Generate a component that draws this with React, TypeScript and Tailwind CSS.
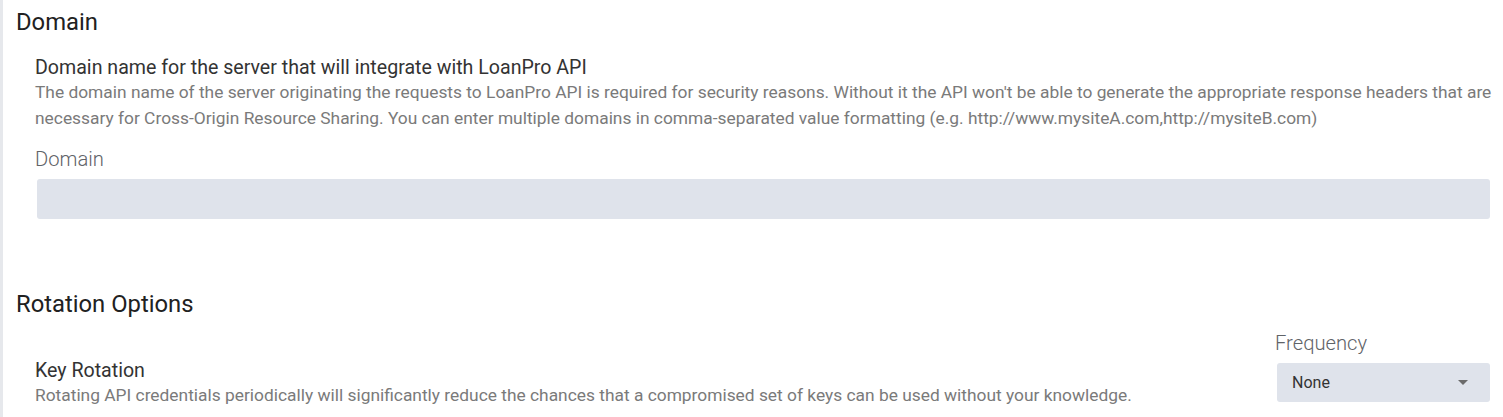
export default function App() {
  return (
    <div className="min-h-[417px] w-full bg-white font-['Roboto',sans-serif] flex">
      <div className="w-[3px] shrink-0 bg-[#e6e8ec]" />
      <div className="flex-1 pl-[13px] pr-[13px]">
        {/* Domain */}
        <section className="pt-[9px]">
          <h2 className="text-[23.8px] leading-[26px] text-[#212121]">Domain</h2>
          <div className="pl-[19px] pt-[22px]">
            <div className="text-[19.6px] leading-[22px] text-[#333]">
              Domain name for the server that will integrate with LoanPro API
            </div>
            <p className="mr-[-8px] text-[17.36px] leading-[26px] text-[#7a7a7a]">
              The domain name of the server originating the requests to LoanPro API is required for security reasons. Without it the API won't be able to generate the appropriate response headers that are necessary for Cross-Origin Resource Sharing. You can enter multiple domains in comma-separated value formatting (e.g. http://www.mysiteA.com,http://mysiteB.com)
            </p>
            <label className="block pt-[16px] text-[20.2px] leading-[24px] font-light text-[#5f6368]">Domain</label>
            <div className="mt-[8px] ml-[2px] h-[40px] rounded-[3px] bg-[#dfe3eb]" />
          </div>
        </section>

        {/* Rotation Options */}
        <section className="pt-[72px]">
          <h2 className="text-[23.8px] leading-[26px] text-[#212121]">Rotation Options</h2>
          <div className="pl-[19px] pt-[14px] flex items-start justify-between">
            <div className="pt-[28px]">
              <div className="text-[19.6px] leading-[24px] text-[#333]">Key Rotation</div>
              <div className="text-[17.36px] leading-[24px] text-[#7a7a7a]">
                Rotating API credentials periodically will significantly reduce the chances that a compromised set of keys can be used without your knowledge.
              </div>
            </div>
            <div className="w-[215px]">
              <label className="block text-[20.2px] leading-[24px] font-light text-[#5f6368]">Frequency</label>
              <div className="mt-[8px] ml-[2px] h-[39px] rounded-[3px] bg-[#dfe3eb] flex items-center justify-between pl-[15px] pr-[22px]">
                <span className="text-[16px] text-[#333]">None</span>
                <span className="w-0 h-0 border-l-[5px] border-r-[5px] border-t-[5px] border-l-transparent border-r-transparent border-t-[#6b6b6b]" />
              </div>
            </div>
          </div>
        </section>
      </div>
    </div>
  );
}
